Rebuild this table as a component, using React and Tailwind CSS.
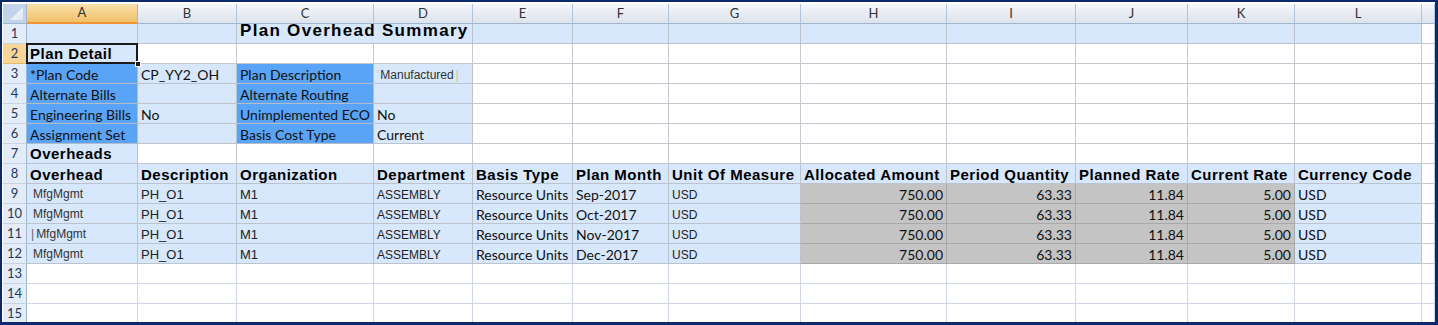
import React from "react";

const CELL = "border-r border-b whitespace-nowrap flex items-end px-[3px] relative overflow-hidden leading-[16px]";
const LB = "bg-[#d7e7fc] border-[#bcc3cc]";
const BL = "bg-[#5aa4f7] border-[#b4bcc8]";
const GR = "bg-[#c4c4c4] border-[#a9a9a9] justify-end";
const WH = "bg-white border-[#c4c8cf]";
const WH2 = "bg-white border-[#d0d7e5]";

const CAL = "font-['Lato',sans-serif] text-[14px] text-[#111] pb-0";
const ARB = "font-['Liberation_Sans',Arial,sans-serif] font-bold text-[15px] tracking-[0.5px] text-black pb-0";
const ARS = "font-['Liberation_Sans',Arial,sans-serif] text-[12px] text-[#222] pb-0";

function Cell({ bg, f = CAL, className = "", children }) {
  return <div className={`${CELL} ${bg} ${f} ${className}`}>{children}</div>;
}

function RowHead({ n, sel }) {
  return (
    <div
      className={
        sel
          ? "bg-[#f8d596] border-r border-b border-r-[#f29536] border-b-[#e9b96a] flex items-center justify-center font-['Lato',sans-serif] text-[13px] text-[#1e3a5f]"
          : "bg-[#e4ecf7] border-r border-b border-r-[#9eb6ce] border-b-[#c6d4e6] flex items-center justify-center font-['Lato',sans-serif] text-[13px] text-[#1e3a5f]"
      }
    >
      {n}
    </div>
  );
}

function ColHead({ l, sel }) {
  return (
    <div
      className={
        sel
          ? "bg-linear-to-b from-[#f9dfa8] to-[#f1c36a] border-r border-b-2 border-r-[#e6b15c] border-b-[#f29536] flex items-center justify-center font-['Lato',sans-serif] text-[13px] text-[#333]"
          : "bg-linear-to-b from-[#f4f6fa] to-[#dde3ec] border-r border-b border-r-[#b1c3d8] border-b-[#9eb6ce] flex items-center justify-center font-['Lato',sans-serif] text-[13px] text-[#333]"
      }
    >
      {l}
    </div>
  );
}

const cols = ["A", "B", "C", "D", "E", "F", "G", "H", "I", "J", "K", "L"];

function Blank({ n, from = 0, bg = WH }) {
  const out = [];
  for (let i = from; i < n; i++) out.push(<Cell key={i} bg={bg} />);
  return out;
}

export default function App() {
  const months = ["Sep-2017", "Oct-2017", "Nov-2017", "Dec-2017"];
  return (
    <div className="w-[1438px] h-[325px] bg-[#0b2a6b] pt-[2px] pl-[2px] pr-[3px] pb-[3px]">
      <div className="w-full h-full bg-white overflow-hidden pl-[1px] pt-[2px]">
        <div className="grid grid-cols-[24px_111px_99px_137px_99px_100px_96px_132px_146px_129px_112px_107px_127px_13px] auto-rows-[20px]">
          {/* header row */}
          <div className="bg-[#c3d3ea] border-r border-b border-r-[#9eb6ce] border-b-[#9eb6ce] relative">
            <svg className="absolute right-[3px] bottom-[3px]" width="13" height="13" viewBox="0 0 13 13">
              <defs>
                <linearGradient id="tri" x1="0" y1="0" x2="1" y2="1">
                  <stop offset="0" stopColor="#ffffff" />
                  <stop offset="1" stopColor="#dbe5f2" />
                </linearGradient>
              </defs>
              <polygon points="13,0 13,13 0,13" fill="url(#tri)" />
            </svg>
          </div>
          {cols.map((c) => (
            <ColHead key={c} l={c} sel={c === "A"} />
          ))}
          <ColHead l="" />

          {/* row 1 */}
          <RowHead n={1} />
          <Cell bg={LB} />
          <Cell bg={LB} />
          <div className="border-r border-b whitespace-nowrap flex items-end px-[3px] relative overflow-visible bg-[#d7e7fc] border-[#bcc3cc] col-span-2 font-['Liberation_Sans',Arial,sans-serif] font-bold text-[17px] leading-[14px] tracking-[1.3px] text-black pb-[5px]">
            Plan Overhead Summary
          </div>
          <Blank n={8} bg={LB} />
          <Cell bg={WH} />

          {/* row 2 */}
          <RowHead n={2} sel />
          <div className={`${CELL} ${LB} ${ARB} !pb-[1px] overflow-visible`}>
            <span>Plan Detail</span>
            <div className="absolute left-[-1px] top-[-1px] right-[-1px] bottom-[-1px] border-2 border-[#1a1a1a] pointer-events-none" />
            <div className="absolute right-[-4px] bottom-[-4px] w-[6px] h-[6px] bg-[#1a1a1a] border border-white z-10" />
          </div>
          <Blank n={12} bg={WH} />

          {/* rows 3-6 */}
          <RowHead n={3} />
          <Cell bg={BL}>*Plan Code</Cell>
          <Cell bg={LB}>CP_YY2_OH</Cell>
          <Cell bg={BL}>Plan Description</Cell>
          <Cell bg={LB} f={ARS} className="text-[#333]">
            <span className="text-[#e8c070] mr-[1px]">'</span>Manufactured<span className="text-[#e8c070] ml-[2px]">|</span>
          </Cell>
          <Blank n={9} bg={WH} />

          <RowHead n={4} />
          <Cell bg={BL}>Alternate Bills</Cell>
          <Cell bg={LB} />
          <Cell bg={BL}>Alternate Routing</Cell>
          <Cell bg={LB} />
          <Blank n={9} bg={WH} />

          <RowHead n={5} />
          <Cell bg={BL}>Engineering Bills</Cell>
          <Cell bg={LB}>No</Cell>
          <Cell bg={BL}>Unimplemented ECO</Cell>
          <Cell bg={LB}>No</Cell>
          <Blank n={9} bg={WH} />

          <RowHead n={6} />
          <Cell bg={BL}>Assignment Set</Cell>
          <Cell bg={LB} />
          <Cell bg={BL}>Basis Cost Type</Cell>
          <Cell bg={LB}>Current</Cell>
          <Blank n={9} bg={WH} />

          {/* row 7 */}
          <RowHead n={7} />
          <Cell bg={LB} f={ARB} className="!pb-[1px]">Overheads</Cell>
          <Blank n={12} bg={WH} />

          {/* row 8 */}
          <RowHead n={8} />
          {["Overhead", "Description", "Organization", "Department", "Basis Type", "Plan Month", "Unit Of Measure", "Allocated Amount", "Period Quantity", "Planned Rate", "Current Rate", "Currency Code"].map((h) => (
            <Cell key={h} bg={LB} f={ARB}>
              {h}
            </Cell>
          ))}
          <Cell bg={WH} />

          {/* rows 9-12 */}
          {months.map((m, i) => (
            <React.Fragment key={m}>
              <RowHead n={9 + i} />
              <Cell bg={LB} f={ARS} className="text-[#333] !pb-[1px]">
                <span className={i === 2 ? "ml-[1px]" : "ml-[3px]"}>
                  {i === 2 && <span className="text-[#666] mr-[2px]">|</span>}
                  MfgMgmt
                </span>
              </Cell>
              <Cell bg={LB} f={ARS} className="text-[13px]">PH_O1</Cell>
              <Cell bg={LB} f={ARS} className="text-[13px]">M1</Cell>
              <Cell bg={LB} f={ARS}>ASSEMBLY</Cell>
              <Cell bg={LB}>Resource Units</Cell>
              <Cell bg={LB}>{m}</Cell>
              <Cell bg={LB} f={ARS}>USD</Cell>
              <Cell bg={GR}>750.00</Cell>
              <Cell bg={GR}>63.33</Cell>
              <Cell bg={GR}>11.84</Cell>
              <Cell bg={GR}>5.00</Cell>
              <Cell bg={LB}>USD</Cell>
              <Cell bg={WH} />
            </React.Fragment>
          ))}

          {/* rows 13-15 */}
          {[13, 14, 15].map((n) => (
            <React.Fragment key={n}>
              <RowHead n={n} />
              <Blank n={13} bg={WH2} />
            </React.Fragment>
          ))}
        </div>
      </div>
    </div>
  );
}
